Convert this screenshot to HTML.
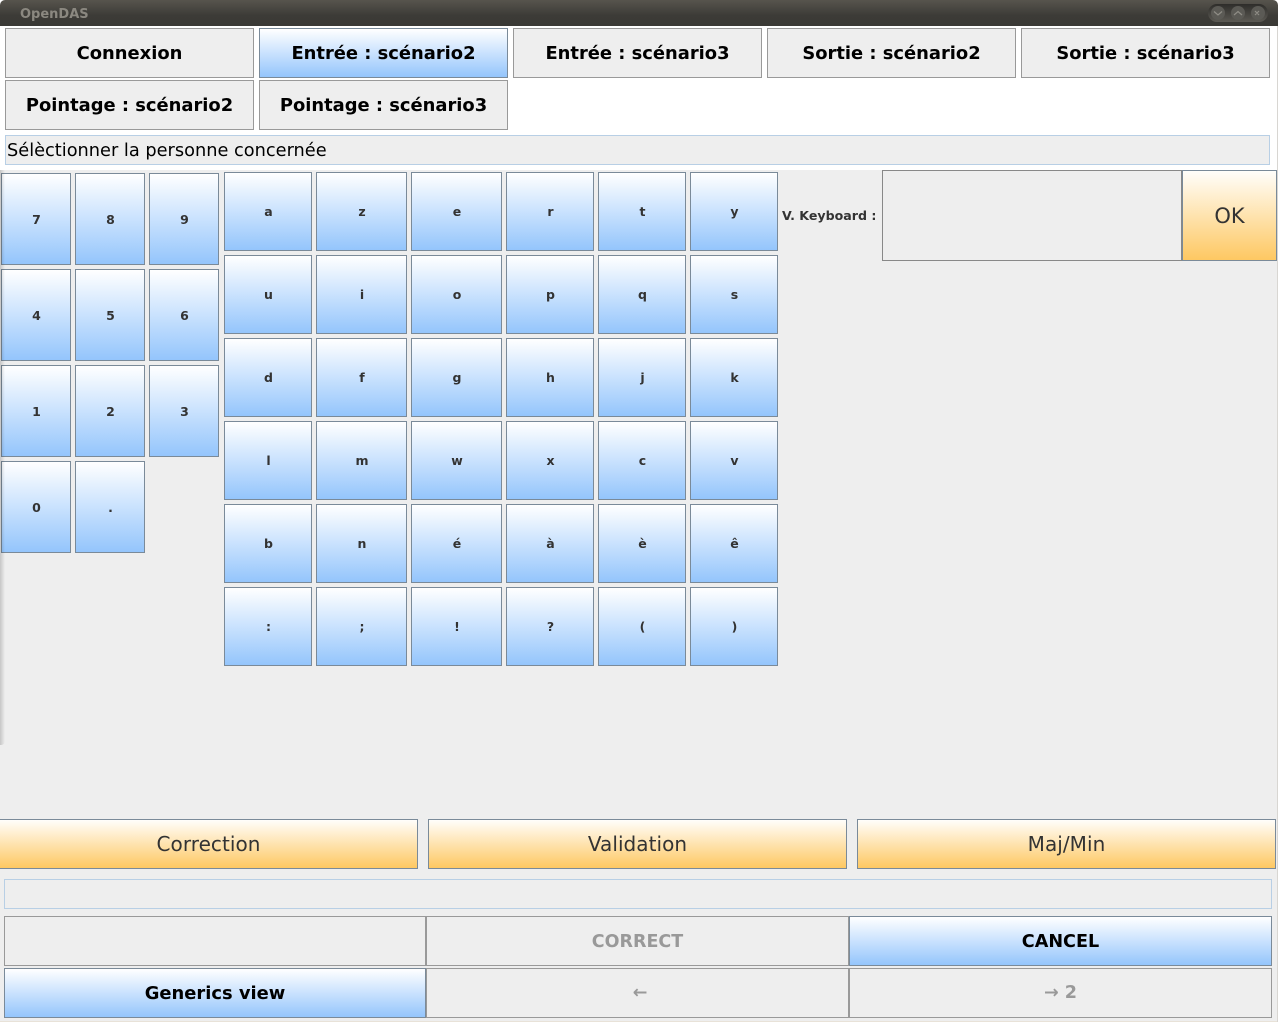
<!DOCTYPE html>
<html><head><meta charset="utf-8"><title>OpenDAS</title>
<style>
html,body{margin:0;padding:0;width:1278px;height:1022px;overflow:hidden;background:#000;}
#w{position:absolute;left:0;top:0;width:1278px;height:1022px;overflow:hidden;background:#eeeeee;font-family:"DejaVu Sans",sans-serif;}
#w div{position:absolute;box-sizing:border-box;}
.b{display:flex;align-items:center;justify-content:center;white-space:nowrap;}
.t{background:#eeeeee;border:1px solid #999;font-weight:bold;font-size:17.9px;color:#000;}
.blue{background:linear-gradient(#fff,#94c5fc);border:1px solid #7a8a99;}
.n{font-weight:bold;font-size:12.5px;color:#333;padding-left:1px;padding-bottom:0;}
.org{background:linear-gradient(#fffefb,#fec862);border:1px solid #7a8a99;color:#333;font-size:20px;letter-spacing:.05px;}
.l{background:#eeeeee;border:1px solid #b8cfe5;}
.g{background:#eeeeee;border:1px solid #999;font-weight:bold;font-size:17.6px;color:#999;}
.bb{font-weight:bold;font-size:17.8px;color:#000;}
</style></head><body>
<div id="w">
<div style="left:0;top:0;width:1278px;height:170px;background:#fff"></div>
<div style="left:0;top:0;width:1278px;height:26px;background:linear-gradient(#57544d,#3c3b37 60%,#3a3935);border-radius:5px 5px 0 0"></div>
<div style="left:20px;top:7px;font-size:13px;font-weight:bold;color:#8b8880;line-height:16px">OpenDAS</div>
<div style="left:1208px;top:4px;width:60px;height:18px;border-radius:9px;background:linear-gradient(#2e2d2a,#5c5a54)"></div>
<div style="left:1211px;top:6px;width:14px;height:14px;border-radius:7px;background:#5b5a55"></div>
<div style="left:1231px;top:6px;width:14px;height:14px;border-radius:7px;background:#5b5a55"></div>
<div style="left:1251px;top:6px;width:14px;height:14px;border-radius:7px;background:#5b5a55"></div>
<svg style="position:absolute;left:1208px;top:4px" width="60" height="18" fill="none" stroke="#8f8d86" stroke-width="1.2"><path d="M6 7.5l4 3.5 4-3.5M26 11l4-3.5 4 3.5M47 7l4 4M51 7l-4 4"/></svg>

<div class="b t" style="left:5px;top:28px;width:249px;height:50px">Connexion</div>
<div class="b blue bb" style="left:259px;top:28px;width:249px;height:50px;font-size:17.9px">Entrée : scénario2</div>
<div class="b t" style="left:513px;top:28px;width:249px;height:50px">Entrée : scénario3</div>
<div class="b t" style="left:767px;top:28px;width:249px;height:50px">Sortie : scénario2</div>
<div class="b t" style="left:1021px;top:28px;width:249px;height:50px">Sortie : scénario3</div>
<div class="b t" style="left:5px;top:80px;width:249px;height:50px">Pointage : scénario2</div>
<div class="b t" style="left:259px;top:80px;width:249px;height:50px">Pointage : scénario3</div>

<div class="l" style="left:5px;top:135px;width:1265px;height:30px;font-size:17.75px;color:#000;padding-left:1px;line-height:30px;white-space:nowrap">Sélèctionner la personne concernée</div>

<div class="b blue n" style="left:1px;top:173px;width:70px;height:92px">7</div>
<div class="b blue n" style="left:75px;top:173px;width:70px;height:92px">8</div>
<div class="b blue n" style="left:149px;top:173px;width:70px;height:92px">9</div>
<div class="b blue n" style="left:1px;top:269px;width:70px;height:92px">4</div>
<div class="b blue n" style="left:75px;top:269px;width:70px;height:92px">5</div>
<div class="b blue n" style="left:149px;top:269px;width:70px;height:92px">6</div>
<div class="b blue n" style="left:1px;top:365px;width:70px;height:92px">1</div>
<div class="b blue n" style="left:75px;top:365px;width:70px;height:92px">2</div>
<div class="b blue n" style="left:149px;top:365px;width:70px;height:92px">3</div>
<div class="b blue n" style="left:1px;top:461px;width:70px;height:92px">0</div>
<div class="b blue n" style="left:75px;top:461px;width:70px;height:92px">.</div>

<div class="b blue n" style="left:224px;top:172px;width:88px;height:79px">a</div>
<div class="b blue n" style="left:316px;top:172px;width:91px;height:79px">z</div>
<div class="b blue n" style="left:411px;top:172px;width:91px;height:79px">e</div>
<div class="b blue n" style="left:506px;top:172px;width:88px;height:79px">r</div>
<div class="b blue n" style="left:598px;top:172px;width:88px;height:79px">t</div>
<div class="b blue n" style="left:690px;top:172px;width:88px;height:79px">y</div>

<div class="b blue n" style="left:224px;top:255px;width:88px;height:79px">u</div>
<div class="b blue n" style="left:316px;top:255px;width:91px;height:79px">i</div>
<div class="b blue n" style="left:411px;top:255px;width:91px;height:79px">o</div>
<div class="b blue n" style="left:506px;top:255px;width:88px;height:79px">p</div>
<div class="b blue n" style="left:598px;top:255px;width:88px;height:79px">q</div>
<div class="b blue n" style="left:690px;top:255px;width:88px;height:79px">s</div>

<div class="b blue n" style="left:224px;top:338px;width:88px;height:79px">d</div>
<div class="b blue n" style="left:316px;top:338px;width:91px;height:79px">f</div>
<div class="b blue n" style="left:411px;top:338px;width:91px;height:79px">g</div>
<div class="b blue n" style="left:506px;top:338px;width:88px;height:79px">h</div>
<div class="b blue n" style="left:598px;top:338px;width:88px;height:79px">j</div>
<div class="b blue n" style="left:690px;top:338px;width:88px;height:79px">k</div>

<div class="b blue n" style="left:224px;top:421px;width:88px;height:79px">l</div>
<div class="b blue n" style="left:316px;top:421px;width:91px;height:79px">m</div>
<div class="b blue n" style="left:411px;top:421px;width:91px;height:79px">w</div>
<div class="b blue n" style="left:506px;top:421px;width:88px;height:79px">x</div>
<div class="b blue n" style="left:598px;top:421px;width:88px;height:79px">c</div>
<div class="b blue n" style="left:690px;top:421px;width:88px;height:79px">v</div>

<div class="b blue n" style="left:224px;top:504px;width:88px;height:79px">b</div>
<div class="b blue n" style="left:316px;top:504px;width:91px;height:79px">n</div>
<div class="b blue n" style="left:411px;top:504px;width:91px;height:79px">é</div>
<div class="b blue n" style="left:506px;top:504px;width:88px;height:79px">à</div>
<div class="b blue n" style="left:598px;top:504px;width:88px;height:79px">è</div>
<div class="b blue n" style="left:690px;top:504px;width:88px;height:79px">ê</div>

<div class="b blue n" style="left:224px;top:587px;width:88px;height:79px">:</div>
<div class="b blue n" style="left:316px;top:587px;width:91px;height:79px">;</div>
<div class="b blue n" style="left:411px;top:587px;width:91px;height:79px">!</div>
<div class="b blue n" style="left:506px;top:587px;width:88px;height:79px">?</div>
<div class="b blue n" style="left:598px;top:587px;width:88px;height:79px">(</div>
<div class="b blue n" style="left:690px;top:587px;width:88px;height:79px">)</div>

<div style="left:782px;top:208px;font-size:12.6px;font-weight:bold;color:#333;line-height:16px;white-space:nowrap">V. Keyboard :</div>
<div style="left:882px;top:170px;width:300px;height:91px;border:1px solid #888;background:#eee"></div>
<div class="b org" style="left:1182px;top:170px;width:95px;height:91px;font-size:21px;letter-spacing:0">OK</div>

<div style="left:0;top:170px;width:5px;height:575px;background:linear-gradient(90deg,rgba(0,0,0,.17),rgba(0,0,0,0));border-radius:0 0 4px 0"></div>

<div class="b org" style="left:-1px;top:819px;width:419px;height:50px">Correction</div>
<div class="b org" style="left:428px;top:819px;width:419px;height:50px">Validation</div>
<div class="b org" style="left:857px;top:819px;width:419px;height:50px">Maj/Min</div>

<div class="l" style="left:4px;top:879px;width:1268px;height:30px"></div>

<div class="b g" style="left:4px;top:916px;width:422px;height:50px"></div>
<div class="b g" style="left:426px;top:916px;width:423px;height:50px;font-size:17.5px;padding-top:2px">CORRECT</div>
<div class="b blue bb" style="left:849px;top:916px;width:423px;height:50px;font-size:17.6px;padding-top:2px">CANCEL</div>
<div class="b blue bb" style="left:4px;top:968px;width:422px;height:50px;font-size:17.9px">Generics view</div>
<div class="b g" style="left:426px;top:968px;width:423px;height:50px;padding-left:5px">←</div>
<div class="b g" style="left:849px;top:968px;width:423px;height:50px">→ 2</div>
<div style="left:0;top:1021px;width:1278px;height:1px;background:#e8e2d8"></div>
<div style="left:1277px;top:26px;width:1px;height:996px;background:#d8d6d2"></div>
</div>
</body></html>
